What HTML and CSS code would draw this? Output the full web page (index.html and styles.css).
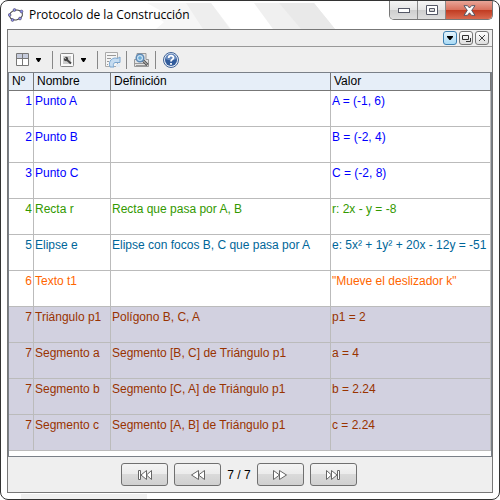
FILE: index.html
```html
<!DOCTYPE html>
<html lang="es">
<head>
<meta charset="UTF-8">
<meta name="viewport" content="width=device-width, initial-scale=1.0">
<title>Protocolo de la Construcción</title>
<link rel="stylesheet" href="styles.css">
</head>
<body>

<div class="window">
    <svg class="streaks" width="500" height="30" viewBox="0 0 500 30" aria-hidden="true">
        <path d="M146 2h64l20 26h-75l8-7-8-5 7-5z" fill="#f6f6f6"/>
        <path d="M185 2h25l19 26h-27z" fill="#eeeeee"/>
        <path d="M253 2h60l21 26h-62z" fill="#f0f0f0"/>
        <path d="M278 2h35l21 26h-34z" fill="#e9e9e9"/>
    </svg>

    <header class="titlebar">
        <svg width="16" height="14" viewBox="0 0 16 14" aria-hidden="true">
            <ellipse cx="8" cy="7" rx="6.5" ry="4.8" transform="rotate(-12 8 7)" fill="none" stroke="#444"/>
            <g fill="#9090f5" stroke="#445" stroke-width=".6">
                <circle cx="6.5" cy="2" r="1.4"/><circle cx="13.5" cy="3.5" r="1.4"/><circle cx="12" cy="10.5" r="1.4"/><circle cx="4.5" cy="12" r="1.4"/><circle cx="1.6" cy="7" r="1.4"/>
            </g>
        </svg>
        <h1>Protocolo de la Construcción</h1>
        <div class="controls">
            <button type="button" aria-label="Minimizar">
                <svg width="14" height="7" viewBox="0 0 14 7"><rect x="1.5" y="1.5" width="11" height="4" fill="#fff" stroke="#555866"/></svg>
            </button>
            <button type="button" aria-label="Maximizar">
                <svg width="12" height="10" viewBox="0 0 12 10"><path d="M.5.5h11v9H.5zM3.5 3.5v3h5v-3z" fill="#fff" fill-rule="evenodd" stroke="#555866"/></svg>
            </button>
            <button type="button" class="close" aria-label="Cerrar">
                <svg width="13" height="11" viewBox="0 0 13 11"><path d="M1 .7h3.5L6.5 3 8.5.7H12L8.7 5.4 12 10.3H8.5L6.5 7.8 4.5 10.3H1L4.3 5.4z" fill="#fff" stroke="#555866"/></svg>
            </button>
        </div>
    </header>

    <main class="panel">
        <div class="dock">
            <button type="button" class="active" aria-label="Mostrar barra">
                <svg width="12" height="12" viewBox="0 0 12 12"><path d="M3 4h6v1L6.5 8h-1L3 5z" fill="#000"/></svg>
            </button>
            <button type="button" aria-label="Separar vista">
                <svg width="12" height="12" viewBox="0 0 12 12"><path d="M2.5 3.5h6v4h-6zM10.500 6v3.500H6" fill="none" stroke="#333"/></svg>
            </button>
            <button type="button" aria-label="Cerrar vista">
                <svg width="12" height="12" viewBox="0 0 12 12"><path d="M3 3l6 6M9 3l-6 6" fill="none" stroke="#444"/></svg>
            </button>
        </div>

        <div class="toolbar">
            <button type="button" class="menu" aria-label="Columnas">
                <svg width="26" height="16" viewBox="0 0 26 16">
                    <path d="M.5 1.5h12v12H.5z" fill="#fff"/>
                    <path d="M1 2h11v4H1z" fill="#c5cbdc"/>
                    <path d="M.5 1.5h12v12H.5zM.5 6.5h12M6.5 1.5v12" fill="none" stroke="#777"/>
                    <path d="M20 6h5v1l-2 3h-1l-2-3z" fill="#000"/>
                </svg>
            </button>
            <span class="sep"></span>
            <button type="button" class="menu" aria-label="Opciones">
                <svg width="27" height="16" viewBox="0 0 27 16">
                    <rect x=".5" y="1.5" width="13" height="13" rx="1" fill="#fafafa" stroke="#888"/>
                    <rect x="3" y="4" width="8" height="8" fill="#ccc"/>
                    <circle cx="6" cy="7" r="2.2" fill="#444"/>
                    <path d="M6 7l5 4.5" stroke="#444" stroke-width="2"/>
                    <path d="M3 5l3 1.5" stroke="#ddd"/>
                    <path d="M21 6h5v1l-2 3h-1l-2-3z" fill="#000"/>
                </svg>
            </button>
            <span class="sep"></span>
            <button type="button" aria-label="Exportar">
                <svg width="16" height="16" viewBox="0 0 16 16">
                    <path d="M.5.5h12v14H.5z" fill="#f5f5f5" stroke="#aaa"/>
                    <path d="M2 3.5h9M2 6.5h4M2 9.5h2M2 12.5h1" stroke="#999"/>
                    <path d="M5 15C2.500 9 8 4.500 12.500 6.500L15 5v5.500h-5C8 11 8 13.500 9 15z" fill="#c5dcf1" stroke="#7ba6cf"/>
                    <path d="M11 12h4v3h-4z" fill="#e0ebf6"/>
                </svg>
            </button>
            <span class="sep"></span>
            <button type="button" aria-label="Imprimir">
                <svg width="16" height="16" viewBox="0 0 16 16">
                    <path d="M3 1.5h9v6h2.500v7H.5v-7H3z" fill="#e4e4e4" stroke="#999"/>
                    <path d="M1 11.5h13M2 13.5h11" stroke="#999"/>
                    <path d="M9 8.5l4.500 4.500" stroke="#555" stroke-width="3"/>
                    <path d="M9.500 9l3.500 3.500" stroke="#ddd"/>
                    <circle cx="6" cy="6" r="3.8" fill="#c4def2" stroke="#5f8ab5" stroke-width="1.5"/>
                    <path d="M6 4v4M4 6h4" stroke="#4f9ccd"/>
                </svg>
            </button>
            <span class="sep"></span>
            <button type="button" aria-label="Ayuda">
                <svg width="16" height="16" viewBox="0 0 16 16">
                    <circle cx="8" cy="8" r="7.5" fill="#e8eef8" stroke="#3f6295"/>
                    <circle cx="8" cy="8" r="6" fill="#315b9b"/>
                    <path d="M2.5 7A5.500 5.500 0 0 1 13.500 7Q8 9.500 2.500 7z" fill="#6689bd"/>
                    <path d="M5.7 6C5.700 3 10.500 3 10.500 5.700C10.500 7.500 8 7.300 8 9.500M8 11v1.800" fill="none" stroke="#fff" stroke-width="1.8"/>
                </svg>
            </button>
        </div>

        <div class="sheet">
            <table>
                <colgroup>
                    <col class="col-num"><col class="col-name"><col class="col-def"><col>
                </colgroup>
                <thead>
                    <tr><th>Nº</th><th>Nombre</th><th>Definición</th><th>Valor</th></tr>
                </thead>
                <tbody>
                    <tr class="point"><td>1</td><td>Punto A</td><td></td><td>A = (-1, 6)</td></tr>
                    <tr class="point"><td>2</td><td>Punto B</td><td></td><td>B = (-2, 4)</td></tr>
                    <tr class="point"><td>3</td><td>Punto C</td><td></td><td>C = (-2, 8)</td></tr>
                    <tr class="line"><td>4</td><td>Recta r</td><td>Recta que pasa por A, B</td><td>r: 2x - y = -8</td></tr>
                    <tr class="conic"><td>5</td><td>Elipse e</td><td>Elipse con focos B, C que pasa por A</td><td>e: 5x² + 1y² + 20x - 12y = -51</td></tr>
                    <tr class="text"><td>6</td><td>Texto t1</td><td></td><td>"Mueve el deslizador k"</td></tr>
                    <tr class="polygon"><td>7</td><td>Triángulo p1</td><td>Polígono B, C, A</td><td>p1 = 2</td></tr>
                    <tr class="polygon"><td>7</td><td>Segmento a</td><td>Segmento [B, C] de Triángulo p1</td><td>a = 4</td></tr>
                    <tr class="polygon"><td>7</td><td>Segmento b</td><td>Segmento [C, A] de Triángulo p1</td><td>b = 2.24</td></tr>
                    <tr class="polygon"><td>7</td><td>Segmento c</td><td>Segmento [A, B] de Triángulo p1</td><td>c = 2.24</td></tr>
                </tbody>
            </table>
        </div>

        <nav class="player">
            <button type="button" aria-label="Primero">
                <svg width="16" height="12" viewBox="0 0 16 12"><path d="M1.5 1.5h2v9h-2zM9.5 1.5v9L4 6zM14.5 1.5v9L9.5 6z"/></svg>
            </button>
            <button type="button" aria-label="Anterior">
                <svg width="16" height="12" viewBox="0 0 16 12"><path d="M8.5 1.5v9L1.5 6zM14.5 1.5v9L8.5 6z"/></svg>
            </button>
            <span>7 / 7</span>
            <button type="button" aria-label="Siguiente">
                <svg width="16" height="12" viewBox="0 0 16 12"><path d="M1.5 1.5v9L7.5 6zM7.5 1.5v9L14.5 6z"/></svg>
            </button>
            <button type="button" aria-label="Último">
                <svg width="16" height="12" viewBox="0 0 16 12"><path d="M1.5 1.5v9L6.5 6zM6.5 1.5v9L12 6zM12.5 1.5h2v9h-2z"/></svg>
            </button>
        </nav>
    </main>
</div>

</body>
</html>
```
FILE: styles.css
```css
* {
    box-sizing: border-box;
}
body {
    margin: 0;
    background: #fff;
    font: 12px/16px "Liberation Sans", Arial, sans-serif;
    color: #000;
}
button {
    display: flex;
    align-items: center;
    justify-content: center;
    margin: 0;
    padding: 0;
    border: none;
    background: none;
}
svg {
    display: block;
}

/* Window frame */
.window {
    position: relative;
    min-height: 100vh;
    padding: 0 6px 6px;
    border: 1px solid #333;
    border-radius: 8px;
    overflow: hidden;
    background: linear-gradient(#f0f0f0, #f0f0f0) 20px 100% / 126px 5px no-repeat #fff;
}
.streaks {
    position: absolute;
    top: 0;
    left: 0;
}
.titlebar {
    position: relative;
    display: flex;
    align-items: center;
    height: 28px;
    padding-left: 1px;
}
.titlebar h1 {
    flex: 1;
    margin: 0;
    padding-left: 5px;
    font: 12px/16px "Open Sans", "Segoe UI", sans-serif;
}
.controls {
    display: flex;
    align-self: flex-start;
    border: 1px solid #777;
    border-top: none;
    border-radius: 0 0 5px 5px;
    overflow: hidden;
}
.controls button {
    width: 28px;
    height: 18px;
    border-right: 1px solid #888;
    background: linear-gradient(#f4f4f4, #e4e4e4 50%, #cecece 50%, #dedede);
}
.controls .close {
    width: 46px;
    border-right: none;
    background: linear-gradient(#e8a598, #d9705c 50%, #c03a20 50%, #d96a50);
}

/* Docked view */
.panel {
    border: 1px solid #777;
    background: #efefef;
}
.dock {
    display: flex;
    align-items: center;
    justify-content: flex-end;
    gap: 2px;
    height: 17px;
    padding-right: 3px;
    border-bottom: 1px solid #999;
}
.dock button {
    width: 14px;
    height: 14px;
    border: 1px solid #777;
    border-radius: 3px;
    background: linear-gradient(#fff, #ddd);
}
.dock .active {
    border-color: #3c7fb1;
    background: linear-gradient(#e5f4fc, #a9daf5);
}
.toolbar {
    display: flex;
    align-items: center;
    height: 25px;
    padding-left: 8px;
}
.menu {
    margin-right: 5px;
}
.sep {
    width: 1px;
    height: 18px;
    margin: 0 7px 0 5px;
    background: #888;
}

/* Construction steps */
.sheet {
    padding-bottom: 5px;
    border: 1px solid #7a8088;
    background: #fff;
}
table {
    width: 100%;
    table-layout: fixed;
    border-spacing: 0;
}
.col-num {
    width: 25px;
}
.col-name {
    width: 77px;
}
.col-def {
    width: 220px;
}
th,
td {
    padding: 0 1px;
    border-right: 1px solid #bbb;
    border-bottom: 1px solid #bbb;
    text-align: left;
    white-space: nowrap;
}
th {
    height: 18px;
    padding: 0 3px;
    border-color: #777;
    background: #e6eef8;
    font-weight: normal;
    line-height: 17px;
}
td {
    height: 36px;
    padding-top: 2px;
    vertical-align: top;
}
td:first-child {
    text-align: right;
}
.point {
    color: #00f;
}
.line {
    color: #390;
}
.conic {
    color: #069;
}
.text {
    color: #f60;
}
.polygon {
    color: #930;
    background: #d2d1e0;
}

/* Step navigation */
.player {
    display: flex;
    align-items: center;
    justify-content: center;
    gap: 6px;
    height: 35px;
    padding-right: 22px;
}
.player button {
    width: 47px;
    height: 23px;
    border: 1px solid #707070;
    border-radius: 3px;
    background: linear-gradient(#f4f4f4, #ebebeb 50%, #dadada 50%, #d0d0d0);
}
.player path {
    fill: #fff;
    stroke: #666;
}
```
